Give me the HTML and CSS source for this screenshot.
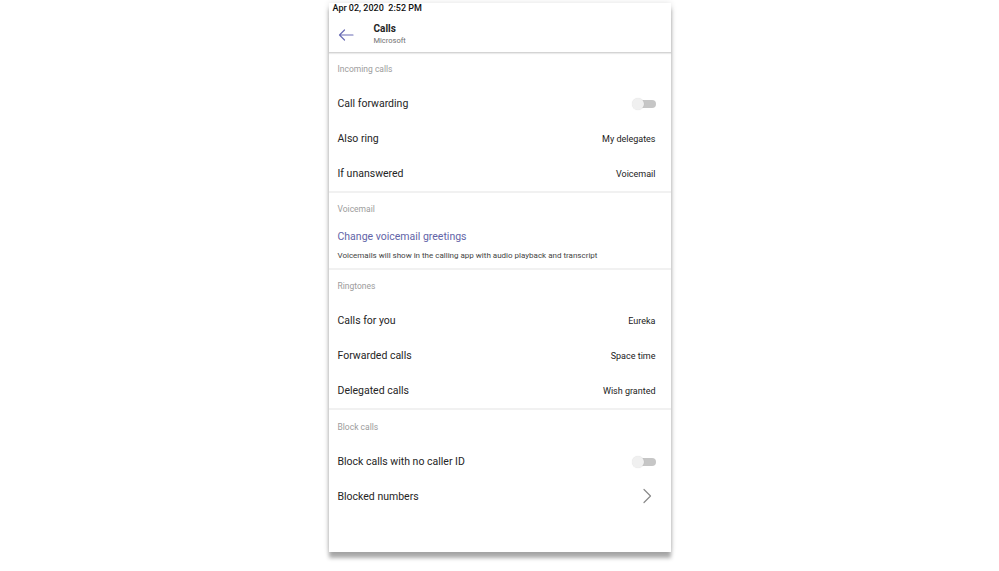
FILE: index.html
```html
<!DOCTYPE html>
<html lang="en">
<head>
  <meta charset="UTF-8" />
  <title>Calls</title>
  <link rel="stylesheet" href="styles.css">
</head>
<body>

  <div class="phone">
    <div class="status">Apr 02, 2020&nbsp;&nbsp;2:52 PM</div>

    <div class="header">
      <svg class="back" width="16" height="12" viewBox="0 0 16 12">
        <path d="M15 6H1.5M6.5 1L1.5 6l5 5" fill="none" stroke="#6b6db5" stroke-width="1.2" stroke-linecap="round" stroke-linejoin="round"/>
      </svg>
      <div class="title">
        <div class="name">Calls</div>
        <div class="sub">Microsoft</div>
      </div>
    </div>

    <div class="section">
      <div class="label">Incoming calls</div>
      <div class="row">
        <span>Call forwarding</span>
        <span class="toggle"></span>
      </div>
      <div class="row">
        <span>Also ring</span>
        <span class="value">My delegates</span>
      </div>
      <div class="row">
        <span>If unanswered</span>
        <span class="value">Voicemail</span>
      </div>
    </div>

    <div class="section">
      <div class="label">Voicemail</div>
      <div class="voicemail">
        <a href="#" class="link">Change voicemail greetings</a>
        <p class="note">Voicemails will show in the calling app with audio playback and transcript</p>
      </div>
    </div>

    <div class="section">
      <div class="label">Ringtones</div>
      <div class="row">
        <span>Calls for you</span>
        <span class="value">Eureka</span>
      </div>
      <div class="row">
        <span>Forwarded calls</span>
        <span class="value">Space time</span>
      </div>
      <div class="row">
        <span>Delegated calls</span>
        <span class="value">Wish granted</span>
      </div>
    </div>

    <div class="section last">
      <div class="label">Block calls</div>
      <div class="row">
        <span>Block calls with no caller ID</span>
        <span class="toggle"></span>
      </div>
      <div class="row">
        <span>Blocked numbers</span>
        <svg class="chevron" width="10" height="16" viewBox="0 0 10 16">
          <path d="M2 1.5l6.5 6.5L2 14.5" fill="none" stroke="#8a8a8a" stroke-width="1.2" stroke-linecap="round" stroke-linejoin="round"/>
        </svg>
      </div>
    </div>
  </div>

</body>
</html>
```

FILE: styles.css
```css
body {
  margin: 0;
  padding-bottom: 12px;
  font-family: Roboto, "Noto Sans", sans-serif;
  background: #fff;
  color: #252525;
}
.phone {
  width: 342px;
  height: 549px;
  margin: 3px auto 0;
  background: #fff;
  box-shadow: 0 6px 4px rgba(0,0,0,0.32), 0 0 6px rgba(0,0,0,0.12);
  display: flex;
  flex-direction: column;
}
.status {
  height: 14px;
  line-height: 10px;
  padding-left: 4px;
  font-size: 9px;
  font-weight: 500;
  color: #111;
}
.header {
  height: 35px;
  display: flex;
  align-items: center;
  padding-left: 9px;
  border-bottom: 1px solid #d4d4d4;
  box-shadow: 0 1px 1px rgba(0,0,0,0.08);
}
.title {
  margin-left: 20px;
  margin-top: -1px;
}
.name {
  font-size: 10px;
  font-weight: 700;
  line-height: 12px;
}
.sub {
  font-size: 7.5px;
  color: #707070;
  line-height: 11px;
}
.section {
  border-bottom: 2px solid #f1f1f1;
}
.section.last {
  border-bottom: none;
}
.label {
  height: 33px;
  line-height: 33px;
  padding-left: 9px;
  font-size: 8.5px;
  color: #9c9c9c;
}
.last .label {
  height: 34px;
  line-height: 35px;
}
.row {
  height: 35px;
  display: flex;
  align-items: center;
  justify-content: space-between;
  padding: 0 15px 0 9px;
  font-size: 10.5px;
}
.value {
  font-size: 9px;
  color: #222;
}
.toggle {
  position: relative;
  width: 24px;
  height: 12px;
}
.toggle::before {
  content: "";
  position: absolute;
  left: 6px;
  top: 2px;
  width: 18px;
  height: 8px;
  border-radius: 4px;
  background: #c6c6c6;
}
.toggle::after {
  content: "";
  position: absolute;
  left: 0;
  top: 0;
  width: 12px;
  height: 12px;
  border-radius: 50%;
  background: #f0f0f0;
  box-shadow: 0 0 1px rgba(0,0,0,0.15);
}
.chevron {
  margin-right: 4px;
  margin-top: -2px;
}
.voicemail {
  padding: 4px 0 7px 9px;
}
.link {
  display: block;
  font-size: 10.5px;
  color: #6264a7;
  text-decoration: none;
  line-height: 14px;
}
.note {
  margin: 7px 0 0;
  font-size: 8px;
  color: #444;
  line-height: 10px;
}
```
